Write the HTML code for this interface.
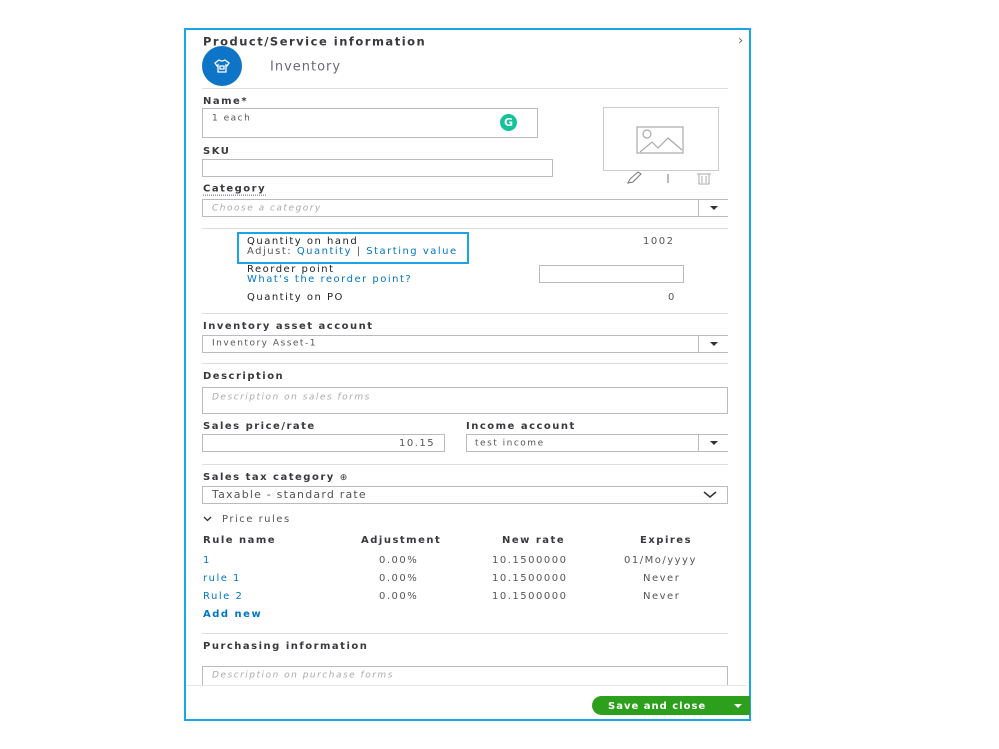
<!DOCTYPE html>
<html><head><style>
body{margin:0;width:999px;height:749px;background:#fff;position:relative;font-family:"DejaVu Sans","Liberation Sans",sans-serif;letter-spacing:1.5px;overflow:hidden;color:#393a3d}
.a{position:absolute;white-space:nowrap}
.b{font-weight:bold;font-size:10px;color:#393a3d}
.l{font-size:10px;color:#0077c5}
.t{font-size:10px;color:#555}
.box{position:absolute;border:1px solid #b8bcc0;background:#fff;box-sizing:border-box}
.hr{position:absolute;left:202px;width:526px;height:1px;background:#dcdee0}
.ph{font-size:9px;color:#aaa;font-style:italic}
.dd{position:absolute;width:30px;border:1px solid #b8bcc0;box-sizing:border-box;background:#fff}
.dd:after{content:"";position:absolute;left:11px;top:6px;border-left:4px solid transparent;border-right:4px solid transparent;border-top:4px solid #333}
.v{transform:translateY(-45%)}
</style></head><body>
<div class="a" style="left:184px;top:28px;width:563px;height:689px;border:2px solid #1ba4e6"></div>
<div class="a b v" style="left:203px;top:41px;font-size:11.5px">Product/Service information</div>
<div class="a v" style="left:738px;top:40px;font-size:13px;color:#666">›</div>
<div class="a" style="left:202px;top:46px;width:40px;height:40px;border-radius:50%;background:#0d74c7"></div>
<svg class="a" style="left:213px;top:57px" width="18" height="18" viewBox="0 0 18 18" fill="none" stroke="#fff" stroke-width="1.3"><path d="M6 3 L2 6 L4 9 L5 8 V15 H13 V8 L14 9 L16 6 L12 3 Q9 5 6 3Z"/><path d="M7 9h4v3H7z"/></svg>
<div class="a v" style="left:270px;top:66px;font-size:13px;color:#6b6c72;letter-spacing:1px">Inventory</div>
<div class="hr" style="top:88px"></div>
<div class="a b v" style="left:203px;top:101px">Name*</div>
<div class="box" style="left:202px;top:108px;width:336px;height:30px"></div>
<div class="a t v" style="left:212px;top:118px;font-size:9px">1 each</div>
<div class="a" style="left:500px;top:114px;width:17px;height:17px;border-radius:50%;background:#15c39a;color:#fff;font-size:11px;font-weight:bold;text-align:center;line-height:17px;letter-spacing:0">G</div>
<div class="box" style="left:603px;top:107px;width:116px;height:64px;border-color:#ccc"></div>
<svg class="a" style="left:636px;top:126px" width="48" height="28" viewBox="0 0 48 28" fill="none" stroke="#aaa" stroke-width="1.2"><rect x="1" y="1" width="46" height="26"/><circle cx="11" cy="8" r="4"/><path d="M4 26 L16 16 L22 22 L32 12 L46 24"/></svg>
<svg class="a" style="left:626px;top:171px" width="90" height="14" viewBox="0 0 90 14" fill="none" stroke="#777" stroke-width="1"><path d="M2 12 L4 8 L12 1 L15 3 L7 11Z"/><path d="M42 3v9"/><path d="M71 3h14M73 3v10h10V3M76 5v7M80 5v7" stroke="#aaa"/></svg>
<div class="a b v" style="left:203px;top:151px">SKU</div>
<div class="box" style="left:202px;top:159px;width:351px;height:18px"></div>
<div class="a b v" style="left:203px;top:189px;border-bottom:1px dotted #666">Category</div>
<div class="box" style="left:202px;top:199px;width:497px;height:18px"></div>
<div class="a ph v" style="left:212px;top:208px">Choose a category</div>
<div class="dd" style="left:698px;top:199px;height:18px;border-right:none"></div>
<div class="hr" style="top:228px"></div>
<div class="a" style="left:237px;top:232px;width:228px;height:28px;border:2px solid #1ba4e6"></div>
<div class="a v" style="left:247px;top:241px;font-size:10px;color:#222">Quantity on hand</div>
<div class="a t v" style="left:247px;top:251px">Adjust: <span style="color:#0077c5">Quantity</span> | <span style="color:#0077c5">Starting value</span></div>
<div class="a t v" style="left:643px;top:241px">1002</div>
<div class="a v" style="left:247px;top:269px;font-size:10px;color:#222">Reorder point</div>
<div class="a l v" style="left:247px;top:279px">What's the reorder point?</div>
<div class="box" style="left:539px;top:265px;width:145px;height:18px"></div>
<div class="a v" style="left:247px;top:297px;font-size:10px;color:#222">Quantity on PO</div>
<div class="a t v" style="left:668px;top:297px">0</div>
<div class="hr" style="top:313px"></div>
<div class="a b v" style="left:203px;top:326px">Inventory asset account</div>
<div class="box" style="left:202px;top:335px;width:497px;height:18px"></div>
<div class="a t v" style="left:212px;top:343px;font-size:9px">Inventory Asset-1</div>
<div class="dd" style="left:698px;top:335px;height:18px;border-right:none"></div>
<div class="hr" style="top:363px"></div>
<div class="a b v" style="left:203px;top:376px">Description</div>
<div class="box" style="left:202px;top:387px;width:526px;height:27px"></div>
<div class="a ph v" style="left:212px;top:397px">Description on sales forms</div>
<div class="a b v" style="left:203px;top:426px">Sales price/rate</div>
<div class="box" style="left:202px;top:434px;width:243px;height:18px"></div>
<div class="a t v" style="left:399px;top:443px">10.15</div>
<div class="a b v" style="left:466px;top:426px">Income account</div>
<div class="box" style="left:466px;top:434px;width:233px;height:18px"></div>
<div class="a t v" style="left:475px;top:443px;font-size:9px">test income</div>
<div class="dd" style="left:698px;top:434px;height:18px;border-right:none"></div>
<div class="hr" style="top:464px"></div>
<div class="a b v" style="left:203px;top:477px">Sales tax category <span style="font-weight:normal;font-size:9px">⊕</span></div>
<div class="box" style="left:202px;top:486px;width:526px;height:18px"></div>
<div class="a v" style="left:212px;top:494px;font-size:11px;color:#555;letter-spacing:1.2px">Taxable - standard rate</div>
<svg class="a" style="left:703px;top:490px" width="14" height="9"><path d="M1 2 L7 7 L13 2" fill="none" stroke="#333" stroke-width="1.5"/></svg>
<svg class="a" style="left:203px;top:516px" width="9" height="6"><path d="M1 1 L4.5 4.5 L8 1" fill="none" stroke="#333" stroke-width="1.3"/></svg>
<div class="a t v" style="left:222px;top:519px">Price rules</div>
<div class="a b v" style="left:203px;top:540px">Rule name</div>
<div class="a b v" style="left:361px;top:540px">Adjustment</div>
<div class="a b v" style="left:502px;top:540px">New rate</div>
<div class="a b v" style="left:640px;top:540px">Expires</div>
<div class="a l v" style="left:203px;top:560px">1</div>
<div class="a l v" style="left:203px;top:578px">rule 1</div>
<div class="a l v" style="left:203px;top:596px">Rule 2</div>
<div class="a t v" style="left:379px;top:560px">0.00%</div>
<div class="a t v" style="left:379px;top:578px">0.00%</div>
<div class="a t v" style="left:379px;top:596px">0.00%</div>
<div class="a t v" style="left:492px;top:560px">10.1500000</div>
<div class="a t v" style="left:492px;top:578px">10.1500000</div>
<div class="a t v" style="left:492px;top:596px">10.1500000</div>
<div class="a t v" style="left:624px;top:560px">01/Mo/yyyy</div>
<div class="a t v" style="left:643px;top:578px">Never</div>
<div class="a t v" style="left:643px;top:596px">Never</div>
<div class="a l v" style="left:203px;top:614px;font-weight:bold">Add new</div>
<div class="hr" style="top:633px"></div>
<div class="a b v" style="left:203px;top:646px">Purchasing information</div>
<div class="box" style="left:202px;top:666px;width:526px;height:20px;border-bottom:none"></div>
<div class="a ph v" style="left:212px;top:675px">Description on purchase forms</div>
<div class="a" style="left:186px;top:685px;width:561px;height:1px;background:#e6e6e6"></div>
<div class="a" style="left:592px;top:696px;width:158px;height:19px;border-radius:10px 0 0 10px;background:#2ca01c"></div>
<div class="a v" style="left:608px;top:706px;font-size:10px;font-weight:bold;color:#fff;letter-spacing:1px">Save and close</div>
<div class="a" style="left:734px;top:704px;border-left:4px solid transparent;border-right:4px solid transparent;border-top:4px solid #fff"></div>
</body></html>
